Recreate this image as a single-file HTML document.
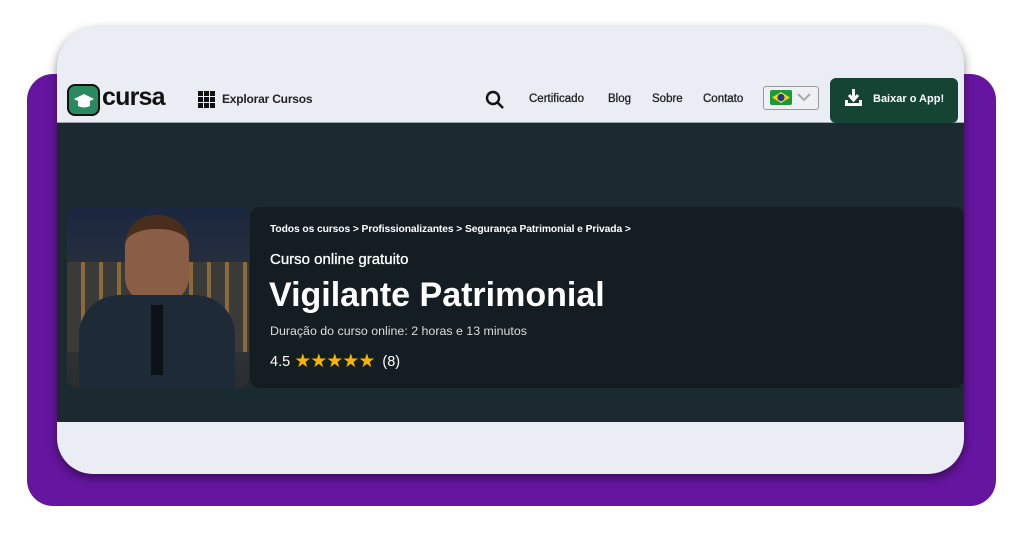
<!DOCTYPE html>
<html><head><meta charset="utf-8"><style>
*{margin:0;padding:0;box-sizing:border-box}
body{width:1024px;height:536px;background:#fff;position:relative;overflow:hidden;font-family:"Liberation Sans",sans-serif}
.purple{position:absolute;left:27px;top:74px;width:969px;height:432px;background:#6615a0;border-radius:26px}
.card{position:absolute;left:57px;top:27px;width:907px;height:447px;background:#eaedf4;border-radius:40px 36px 36px 36px;overflow:hidden;box-shadow:0 4px 10px rgba(0,0,0,.45)}
.dark{position:absolute;left:0;top:95px;width:907px;height:300px;background:#1b2930}
.hdr{position:absolute;left:0;top:95px;width:907px;height:1px;background:#9aa3aa}
.nav{position:absolute;font-size:12px;font-weight:bold;color:#222;top:66px}
.panel{position:absolute;left:193px;top:180px;width:714px;height:181px;background:#141d21;border-radius:10px}
.img{position:absolute;left:10px;top:180px;width:182px;height:181px;border-radius:10px;overflow:hidden;background:linear-gradient(#1a2740,#33363a 60%,#2a2d30)}
.t{position:absolute;color:#fff;font-family:"Liberation Sans",sans-serif}
</style></head><body>
<div class="purple"></div>
<div class="card">
  <div class="dark"></div>
  <div class="hdr"></div>
  <div style="position:absolute;left:10px;top:57px;width:33px;height:32px;background:#2a8a5f;border:2px solid #111;border-radius:8px"></div>
  <svg style="position:absolute;left:16px;top:66px" width="22" height="16"><path d="M1 6 L11 1 L21 6 L11 11Z" fill="#fff"/><path d="M5 8 V13 Q11 16 17 13 V8 L11 11Z" fill="#fff"/></svg>
  <div style="position:absolute;left:45px;top:56px;font-size:25px;font-weight:bold;color:#111;letter-spacing:-0.8px">cursa</div>
  <svg style="position:absolute;left:141px;top:64px" width="17" height="17"><g fill="#111"><rect x="0" y="0" width="5" height="5"/><rect x="6" y="0" width="5" height="5"/><rect x="12" y="0" width="5" height="5"/><rect x="0" y="6" width="5" height="5"/><rect x="6" y="6" width="5" height="5"/><rect x="12" y="6" width="5" height="5"/><rect x="0" y="12" width="5" height="5"/><rect x="6" y="12" width="5" height="5"/><rect x="12" y="12" width="5" height="5"/></g></svg>
  <div class="nav" style="left:165px;top:65px;font-size:12px;letter-spacing:-0.2px">Explorar Cursos</div>
  <svg style="position:absolute;left:428px;top:63px" width="20" height="20"><circle cx="8" cy="8" r="6" stroke="#111" stroke-width="2.4" fill="none"/><path d="M12.5 12.5 L18 18" stroke="#111" stroke-width="2.6"/></svg>
  <div class="nav" style="left:472px;font-size:11.5px;font-weight:normal;-webkit-text-stroke:0.3px #222">Certificado</div>
  <div class="nav" style="left:551px;font-size:11.5px;font-weight:normal;-webkit-text-stroke:0.3px #222">Blog</div>
  <div class="nav" style="left:595px;font-size:11.5px;font-weight:normal;-webkit-text-stroke:0.3px #222">Sobre</div>
  <div class="nav" style="left:646px;font-size:11.5px;font-weight:normal;-webkit-text-stroke:0.3px #222">Contato</div>
  <div style="position:absolute;left:706px;top:59px;width:56px;height:24px;border:1.5px solid #999;border-radius:3px;background:#eef0f4"></div>
  <svg style="position:absolute;left:713px;top:63px" width="22" height="15"><rect width="22" height="15" rx="2" fill="#1a9a3a"/><path d="M11 2 L20 7.5 L11 13 L2 7.5Z" fill="#f6d40a"/><circle cx="11" cy="7.5" r="3.6" fill="#1f3a8f"/></svg>
  <svg style="position:absolute;left:740px;top:66px" width="14" height="9"><path d="M1 1 L7 7 L13 1" stroke="#aaa" stroke-width="2" fill="none"/></svg>
  <div style="position:absolute;left:773px;top:51px;width:128px;height:45px;background:#164434;border-radius:6px"></div>
  <svg style="position:absolute;left:788px;top:62px" width="17" height="18"><path d="M8.5 0 V10 M4 6 L8.5 11 L13 6" stroke="#fff" stroke-width="3" fill="none"/><path d="M0 11 V17 H17 V11 H14 V14 H3 V11Z" fill="#fff"/></svg>
  <div style="position:absolute;left:816px;top:66px;font-size:11px;font-weight:bold;color:#fff">Baixar o App!</div>

  <div class="panel"></div>
  <div class="img">
    <div style="position:absolute;left:0;top:55px;width:182px;height:90px;background:repeating-linear-gradient(90deg,#3a3a38 0 14px,#8a6a3a 14px 18px)"></div>
    <div style="position:absolute;left:58px;top:8px;width:64px;height:88px;background:#8a5e44;border-radius:30px 30px 26px 26px;border-top:14px solid #4a2e1c"></div>
    <div style="position:absolute;left:12px;top:88px;width:156px;height:100px;background:#1f2a38;border-radius:40px 40px 0 0"></div>
    <div style="position:absolute;left:84px;top:98px;width:12px;height:70px;background:#0d1118"></div>
  </div>
  <div class="t" style="left:213px;top:197px;font-size:10.3px;font-weight:bold;letter-spacing:-0.1px">Todos os cursos &gt; Profissionalizantes &gt; Segurança Patrimonial e Privada &gt;</div>
  <div class="t" style="left:213px;top:224px;font-size:15px;-webkit-text-stroke:0.3px #fff">Curso online gratuito</div>
  <div class="t" style="left:212px;top:249px;font-size:34px;font-weight:bold">Vigilante Patrimonial</div>
  <div class="t" style="left:213px;top:297px;font-size:12.4px;color:#ddd">Duração do curso online: 2 horas e 13 minutos</div>
  <div class="t" style="left:213px;top:322px;font-size:14.5px">4.5 <span style="color:#f5b400;font-size:19px;letter-spacing:-1px;position:relative;top:1px">★★★★★</span> &nbsp;(8)</div>
</div>
</body></html>
